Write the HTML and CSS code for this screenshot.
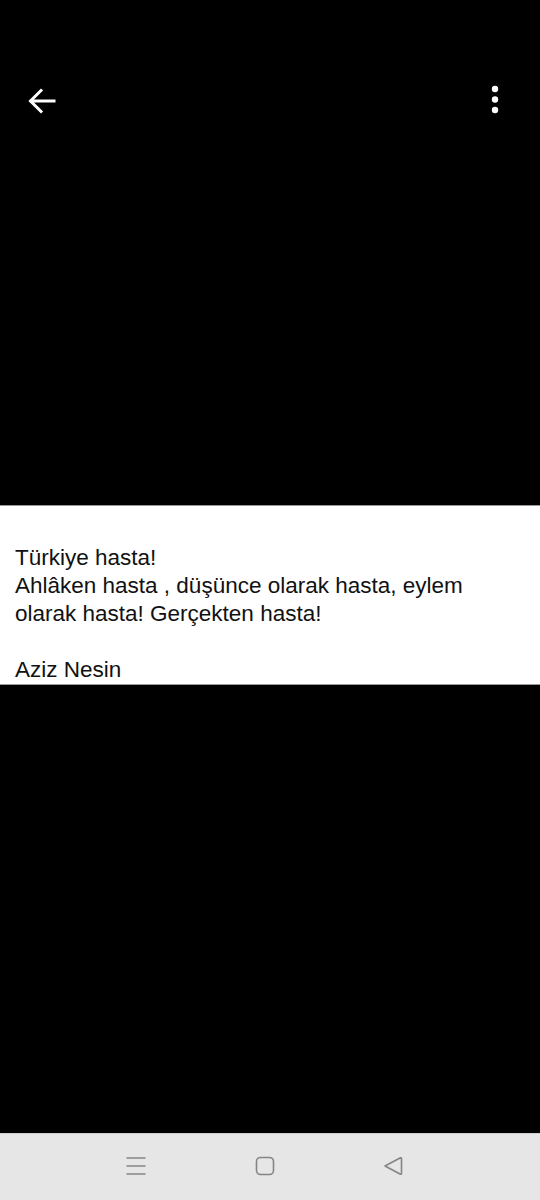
FILE: index.html
```html
<!DOCTYPE html>
<html lang="tr">
<head>
<meta charset="utf-8">
<link rel="stylesheet" href="styles.css">
</head>
<body>
<div class="screen">
  <div class="top">
    <div class="toolbar">
      <svg class="back" width="30" height="26" viewBox="0 0 30 26">
        <path d="M27 13 H4 M14 2.5 L3.5 13 L14 23.5" fill="none" stroke="#fff" stroke-width="3" stroke-linecap="square" stroke-linejoin="miter"/>
      </svg>
      <svg class="more" width="10" height="30" viewBox="0 0 10 30">
        <circle cx="5" cy="4" r="3.2" fill="#fff"/>
        <circle cx="5" cy="14.5" r="3.2" fill="#fff"/>
        <circle cx="5" cy="25" r="3.2" fill="#fff"/>
      </svg>
    </div>
  </div>
  <div class="caption">
    <p>Türkiye hasta!<br>Ahlâken hasta , düşünce olarak hasta, eylem olarak hasta! Gerçekten hasta!<br><br>Aziz Nesin</p>
  </div>
  <div class="bottom"></div>
  <nav class="navbar">
    <svg width="22" height="20" viewBox="0 0 22 20">
      <path d="M1.5 2 H20.5 M1.5 10 H20.5 M1.5 18 H20.5" stroke="#858585" stroke-width="1.6" fill="none"/>
    </svg>
    <svg width="20" height="20" viewBox="0 0 20 20">
      <rect x="1.5" y="1.5" width="17" height="17" rx="4" fill="none" stroke="#858585" stroke-width="1.6"/>
    </svg>
    <svg width="20" height="20" viewBox="0 0 20 20">
      <path d="M2 10 L17.5 1.8 Q18.5 1.4 18.5 2.6 V17.4 Q18.5 18.6 17.5 18.2 Z" fill="none" stroke="#858585" stroke-width="1.6" stroke-linejoin="round"/>
    </svg>
  </nav>
</div>
</body>
</html>
```
FILE: styles.css
```css
* { box-sizing: border-box; }
html, body {
  margin: 0;
  padding: 0;
  background: #000;
}
.screen {
  width: 540px;
  height: 1200px;
  display: flex;
  flex-direction: column;
  background: #000;
}
.top {
  height: 505px;
  background: #000;
  flex: none;
}
.toolbar {
  display: flex;
  justify-content: space-between;
  align-items: center;
  padding: 86px 40px 0 27px;
}
.back { display: block; }
.more { display: block; margin-top: -1px; }
.caption {
  flex: none;
  background: #fff;
  border-top: 1px solid #9a9a9a;
  border-bottom: 1px solid #9a9a9a;
  padding: 38px 15px 0 15px;
}
.caption p {
  margin: 0;
  font-family: "Liberation Sans", Arial, sans-serif;
  font-size: 22.5px;
  line-height: 28px;
  color: #111;
}
.bottom {
  flex: 1;
  background: #000;
}
.navbar {
  flex: none;
  height: 67px;
  background: #e6e6e6;
  border-top: 1px solid #cfcfcf;
  display: flex;
  justify-content: flex-start;
  align-items: center;
  gap: 108px;
  padding: 0 0 2px 125px;
}
.navbar svg { display: block; }
```
